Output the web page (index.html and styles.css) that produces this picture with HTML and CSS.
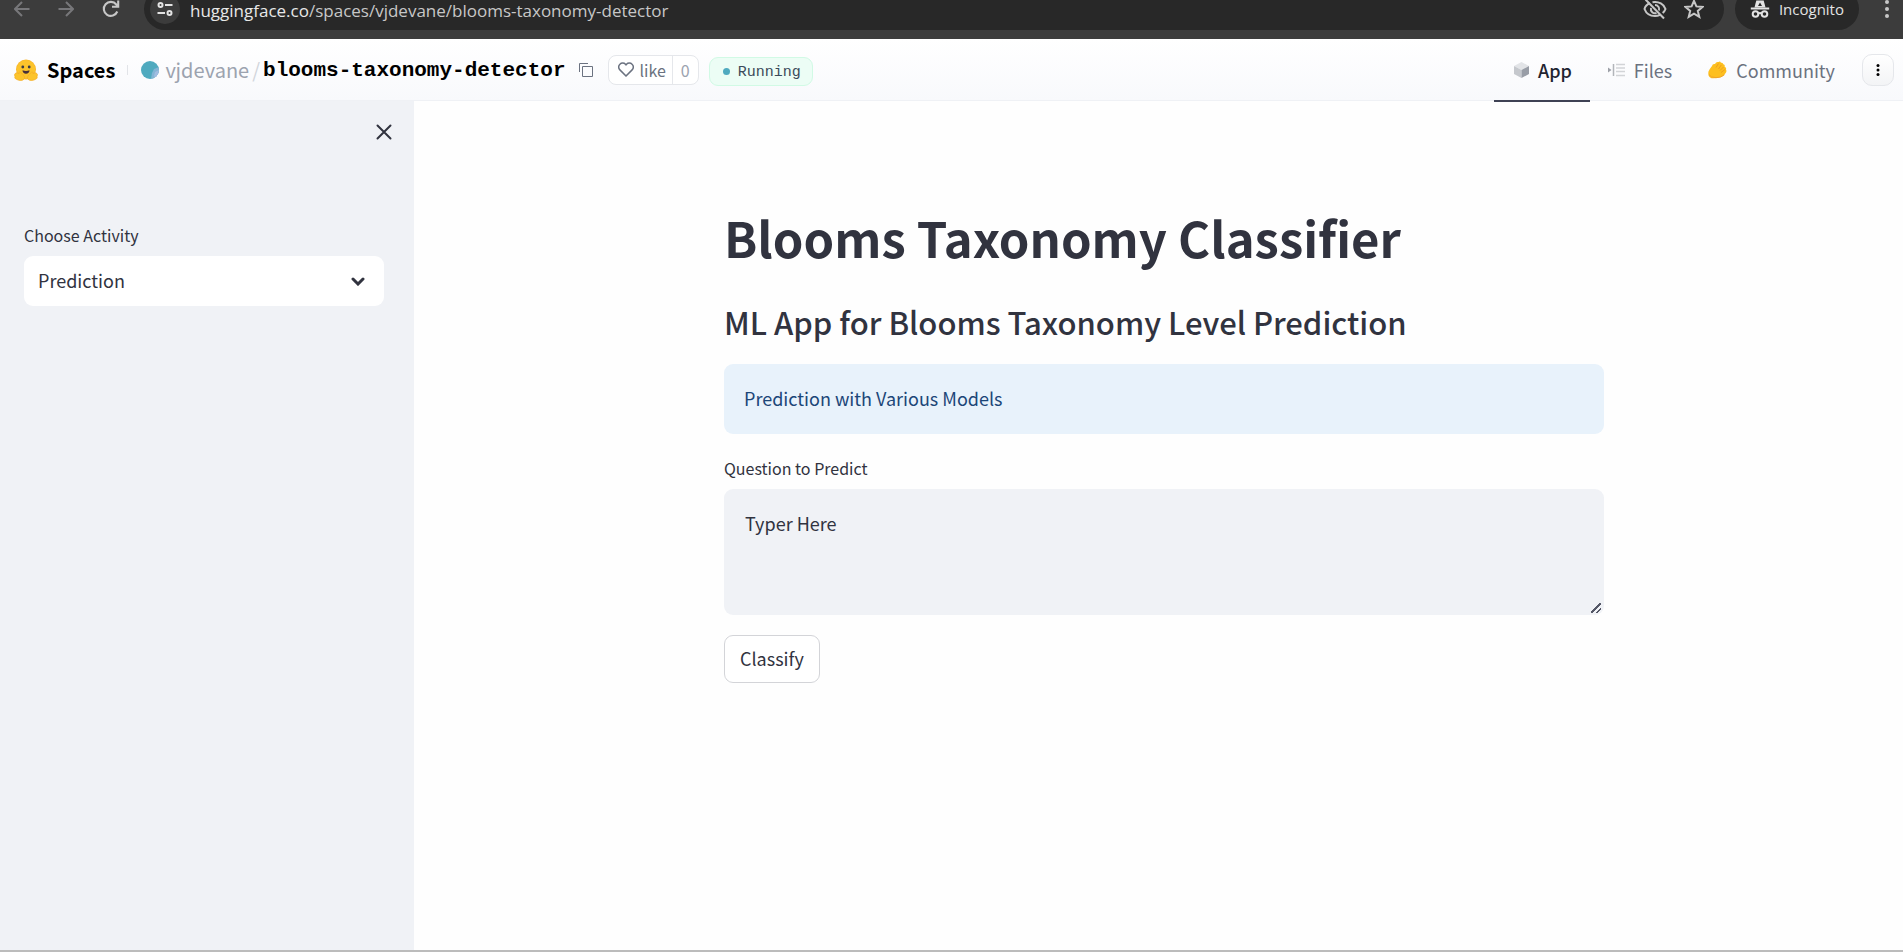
FILE: index.html
```html
<!DOCTYPE html>
<html lang="en">
<head>
<meta charset="utf-8">
<title>Blooms Taxonomy Classifier</title>
<link rel="stylesheet" href="styles.css">
</head>
<body>
<header class="browser">
  <div class="browser-nav">
    <button class="tool dim" aria-label="Back"><svg width="16" height="16" viewBox="0 0 16 16"><path d="M15.500 8H1.500M8 1L1 8l7 7"/></svg></button>
    <button class="tool dim" aria-label="Forward"><svg width="16" height="16" viewBox="0 0 16 16"><path d="M.5 8h14M8 1l7 7-7 7"/></svg></button>
    <button class="tool" aria-label="Reload"><svg width="18" height="18" viewBox="0 0 18 18"><path d="M15.300 11.500A7 7 0 1 1 14.300 4.500L16 6.500M16.200 0.500V6.700H10" stroke-width="2.100"/></svg></button>
  </div>
  <div class="omnibox">
    <button class="site-info" aria-label="Site information"><svg width="16" height="14" viewBox="0 0 16 14"><circle cx="3.500" cy="3" r="2"/><path d="M8 3h7.500M.5 11H8"/><circle cx="12.500" cy="11" r="2"/></svg></button>
    <span class="url"><span class="host">huggingface.co</span>/spaces/vjdevane/blooms-taxonomy-detector</span>
    <button class="tool" aria-label="Third-party cookies blocked"><svg width="24" height="22" viewBox="0 0 24 22"><path d="M7 5.300C3.500 6.500 2 9 1.500 11c1.500 4 5.500 7 10.500 7 2 0 3.500-.4 5-1.200M9.500 4.200C16 3 21 6.500 22.500 11c-.5 1.500-1.500 2.800-2.800 4"/><path d="M12 7a4.200 4.200 0 0 1 4 5.500M8 10a4.200 4.200 0 0 0 5.500 5"/><path d="M2.500 1.500l18.500 19"/></svg></button>
    <button class="tool" aria-label="Bookmark this tab"><svg width="20" height="20" viewBox="0 0 20 20"><path d="M10 1.800l2.400 5.600 6.100.5-4.700 4 1.500 6L10 14.700l-5.300 3.200 1.500-6-4.700-4 6.100-.5z"/></svg></button>
  </div>
  <div class="incognito">
    <svg width="20" height="20" viewBox="0 0 20 20"><path d="M6.300 1.500h7.400L15.500 8.500h-11z" fill="currentColor" stroke="none"/><path d="M8 7l2-3.500L12 7z" fill="#282828" stroke="none"/><path d="M.8 9.500h18.400"/><circle cx="5.500" cy="15" r="2.800"/><circle cx="14.500" cy="15" r="2.800"/><path d="M8 14.500q2-1 4 0"/></svg>
    <span>Incognito</span>
  </div>
  <button class="tool menu" aria-label="Browser menu"><svg width="6" height="22" viewBox="0 0 6 22"><g fill="currentColor" stroke="none"><circle cx="3" cy="4" r="2"/><circle cx="3" cy="11" r="2"/><circle cx="3" cy="18" r="2"/></g></svg></button>
</header>

<nav class="hub">
  <a class="brand" href="#"><svg width="24" height="22" viewBox="0 0 24 22"><circle cx="12" cy="10.500" r="10" fill="#f9b62b"/><circle cx="12" cy="10.300" r="9.200" fill="#fcc42c"/><circle cx="8.800" cy="8" r="1.400" fill="#3a3b45"/><circle cx="15.200" cy="8" r="1.400" fill="#3a3b45"/><path d="M8.500 11.200q3.500 1.500 7 0c0 2.200-1.500 3.500-3.500 3.500s-3.500-1.300-3.500-3.500z" fill="#47303a"/><path d="M1.200 14.500c-.9 1-.8 2-.2 2.700-.6 1.600.3 2.700 1.500 3.100 2.300 1.500 6.300 1.700 7.600-.2 1.100-1.600.2-3.300-1.400-4.600-.8-.8-1.800-2.500-3-2.500-.9 0-1 1-.6 1.900-1.200-.9-2.800-1.600-3.900-.4zM22.800 14.500c.9 1 .8 2 .2 2.700.6 1.600-.3 2.700-1.500 3.100-2.300 1.500-6.300 1.700-7.600-.2-1.100-1.600-.2-3.300 1.400-4.600.8-.8 1.800-2.500 3-2.500.9 0 1 1 .6 1.900 1.200-.9 2.800-1.600 3.900-.4z" fill="#fcc42c" stroke="#f5ae27" stroke-width=".8"/></svg><span>Spaces</span></a>
  <span class="rule"></span>
  <svg class="avatar" width="18" height="18" viewBox="0 0 18 18"><defs><clipPath id="disc"><circle cx="9" cy="9" r="9"/></clipPath></defs><g clip-path="url(#disc)"><path fill="#4faabf" d="M0 0h18v18H0z"/><path fill="#83b5d5" d="M18 6l-5 2-2 4-1 6h8z"/><path fill="#a0bce0" d="M18 9l-4 2-1 4 2 3h3z"/></g></svg>
  <a class="owner" href="#">vjdevane</a><span class="slash">/</span><a class="repo" href="#">blooms-taxonomy-detector</a>
  <button class="copy" aria-label="Copy name"><svg width="14" height="14" viewBox="0 0 14 14"><path d="M3.500 3.500h10v10h-10zM.5 9V.5H9"/></svg></button>
  <div class="like"><button class="like-btn"><svg width="16" height="15" viewBox="0 0 16 15"><path d="M8 14L1.900 7.900a3.900 3.900 0 0 1 0-5.700 3.900 3.900 0 0 1 5.600 0L8 2.800l.5-.6a3.900 3.900 0 0 1 5.600 0 3.900 3.900 0 0 1 0 5.700z"/></svg>like</button><button class="like-count">0</button></div>
  <div class="status"><span class="dot"></span><span>Running</span></div>
  <div class="tabs">
    <a class="tab active" href="#"><svg width="15" height="16" viewBox="0 0 15 16"><path d="M7.500 0L15 4 7.500 8 0 4z" fill="#e2e4e7"/><path d="M0 4l7.500 4v8L0 12z" fill="#c5c8cd"/><path d="M15 4L7.500 8v8l7.500-4z" fill="#989da6"/></svg>App</a>
    <a class="tab" href="#"><svg width="17" height="14" viewBox="0 0 17 14"><path d="M0 4.500L3.500 7 0 9.500z" fill="#9da1a8"/><path d="M5.500 1v12" stroke="#b2b5ba" stroke-width="1.500"/><path d="M8 1.500h9M8 5h9M8 8.500h9M8 12.500h9" stroke="#d2d4d7" stroke-width="1.500"/></svg>Files</a>
    <a class="tab" href="#"><svg width="19" height="18" viewBox="0 0 19 18"><path d="M.5 10.500Q1.500 8 4 5q.5-2.500 3-2 1-2.500 3.500-2 1.500-1.500 2.500.8 2-.5 2.300 1.500 2 .2 1.300 2.400 2 .6 1.400 2.800 1 1.500-.3 3.500-1.700 3-5.700 4.300-4.500 1.500-8.500.9-4-1.200-3-6.700z" fill="#fdbf1f"/><path d="M10.500 8l2.800-4M12 9.500l3.500-3.500M13 11.500l4-3M8 6.500l2.500-4" stroke="#f09f1f" fill="none"/><path d="M1 13.500q1.500 3.200 7 3.200 5 .2 8.500-3" stroke="#efa32a" fill="none"/></svg>Community</a>
  </div>
  <button class="more" aria-label="More options"><svg width="4" height="12" viewBox="0 0 4 12"><circle cx="2" cy="1.500" r="1.500"/><circle cx="2" cy="6" r="1.500"/><circle cx="2" cy="10.500" r="1.500"/></svg></button>
</nav>

<div class="app">
  <aside class="sidebar">
    <button class="close" aria-label="Close sidebar"><svg width="16" height="16" viewBox="0 0 16 16"><path d="M1.500 1.500l13 13M14.500 1.500l-13 13"/></svg></button>
    <label class="label" for="activity">Choose Activity</label>
    <div class="select">
      <select id="activity"><option>Prediction</option></select>
      <svg class="chevron" width="14" height="9" viewBox="0 0 14 9"><path d="M2 2l5 5 5-5"/></svg>
    </div>
  </aside>
  <main class="main">
    <div class="content">
      <h1>Blooms Taxonomy Classifier</h1>
      <h2>ML App for Blooms Taxonomy Level Prediction</h2>
      <div class="info">Prediction with Various Models</div>
      <label class="label" for="question">Question to Predict</label>
      <textarea id="question">Typer Here</textarea>
      <button class="classify">Classify</button>
    </div>
  </main>
</div>
</body>
</html>
```
FILE: styles.css
```css
* { box-sizing: border-box; }

body {
  margin: 0;
  min-height: 100vh;
  display: flex;
  flex-direction: column;
  font-family: "Noto Sans CJK SC", "Open Sans", sans-serif;
  font-size: 18px;
  line-height: 26px;
  color: #31333f;
  background: #fefefe;
  border-bottom: 2px solid #bcbcbc;
}

button, select, textarea { font: inherit; color: inherit; margin: 0; }
button { padding: 0; border: 0; background: none; }
a { color: inherit; text-decoration: none; }
svg { display: block; flex: none; }

/* Browser toolbar */
.browser {
  display: flex;
  align-items: flex-end;
  height: 39px;
  padding: 0 13px 9px 14px;
  overflow: hidden;
  background: #3c3c3c;
  color: #c7c7c7;
}
.browser svg { fill: none; stroke: currentColor; stroke-width: 2; }
.browser-nav { display: flex; align-items: center; gap: 28px; width: 130px; height: 42px; }
.tool { color: #c7c7c7; }
.tool.dim { color: #77777a; }
.omnibox {
  display: flex;
  flex: 1;
  align-items: center;
  gap: 17px;
  height: 42px;
  padding: 0 20px 0 6px;
  border-radius: 21px;
  background: #282828;
}
.site-info {
  display: grid;
  place-items: center;
  width: 30px;
  height: 30px;
  border-radius: 50%;
  background: #3c3c3c;
  color: #e3e3e3;
}
.url { flex: 1; margin-left: -7px; padding-top: 3px; font: 17px/18px "Open Sans", sans-serif; }
.host { color: #e8e8e8; }
.incognito {
  display: flex;
  align-items: center;
  gap: 9px;
  height: 42px;
  margin-left: 11px;
  padding: 0 15px;
  border-radius: 21px;
  background: #282828;
  color: #e3e3e3;
  font: 15px/18px "Open Sans", sans-serif;
}
.menu { display: flex; align-items: center; height: 42px; margin-left: 25px; }

/* Hub header */
.hub {
  display: flex;
  align-items: center;
  height: 62px;
  padding: 0 9px 0 14px;
  border-bottom: 1px solid #eff1f5;
  background: linear-gradient(#fff, #f8f9fc);
}
.brand { display: flex; align-items: center; gap: 9px; font-size: 20px; font-weight: 700; color: #000; }
.rule { width: 1px; height: 10px; margin: 0 13px 0 12px; background: #e2e4e8; }
.avatar { margin-right: 6px; }
.owner { font-size: 20px; color: #9ca3af; }
.slash { margin: 0 3px; font-size: 20px; color: #d1d5db; }
.repo { padding-top: 3px; font-family: "Liberation Mono", monospace; font-size: 21px; font-weight: 700; color: #000; }
.copy { margin-left: 14px; }
.copy svg, .like svg { fill: none; stroke: #6b7280; stroke-width: 1; }
.like svg { stroke-width: 1.5; }
.like {
  display: flex;
  height: 30px;
  margin-left: 15px;
  border: 1px solid #e5e7eb;
  border-radius: 8px;
  background: #fff;
  font-size: 16px;
}
.like-btn { display: flex; align-items: center; gap: 5px; padding: 0 6px 0 9px; color: #6b7280; }
.like-count { padding: 0 8px; border-left: 1px solid #e5e7eb; color: #9ca3af; }
.status {
  display: flex;
  align-items: center;
  gap: 8px;
  height: 29px;
  margin: 4px 0 0 10px;
  padding: 0 11px 0 13px;
  border: 1px solid #d1fae5;
  border-radius: 9px;
  background: #ecfdf5;
  font: 15px/20px "Liberation Mono", monospace;
  color: #3b4a5a;
}
.status span:last-child { padding-top: 3px; }
.dot { width: 7px; height: 7px; border-radius: 50%; background: #4faabf; }
.tabs { display: flex; align-self: stretch; margin-left: auto; }
.tab {
  display: flex;
  align-items: center;
  gap: 9px;
  height: 63px;
  padding: 1px 18px 0;
  border-bottom: 2px solid transparent;
  color: #6b7280;
}
.tab.active { padding: 1px 18px 0 20px; border-color: #3f4254; color: #1f2430; font-weight: 500; }
.more {
  display: grid;
  place-items: center;
  width: 32px;
  height: 32px;
  margin-left: 9px;
  border: 1px solid #e5e7eb;
  border-radius: 10px;
  background: linear-gradient(#fff, #f3f4f6);
}

/* App */
.app { display: flex; flex: 1; }
.sidebar {
  display: flex;
  flex-direction: column;
  width: 414px;
  padding: 23px 30px 24px 24px;
  background: #f0f2f6;
}
.close { align-self: flex-end; margin: 0 -8px 83px 0; }
.close svg, .chevron { fill: none; stroke: #31333f; stroke-width: 2; stroke-linecap: round; }
.label { display: block; margin-bottom: 9px; font-size: 16px; line-height: 24px; }
.select { position: relative; }
.select select {
  width: 100%;
  height: 50px;
  padding: 0 14px 2px;
  appearance: none;
  border: 0;
  border-radius: 9px;
  background: #fff;
}
.chevron { position: absolute; top: 21px; right: 19px; pointer-events: none; stroke-width: 3; }

.main { flex: 1; padding: 104px 24px 24px 35px; }
.content { max-width: 880px; margin: 0 auto; }
h1 { margin: 0; font-size: 49px; line-height: 64px; font-weight: 700; }
h2 { margin: 29px 0 18px; font-size: 31px; line-height: 48px; font-weight: 500; }
.info {
  margin-bottom: 22px;
  padding: 21px 20px 23px;
  border-radius: 9px;
  background: #e8f2fb;
  color: #1c4678;
}
textarea {
  display: block;
  width: 100%;
  height: 126px;
  padding: 21px;
  border: 0;
  border-radius: 9px;
  background: #f0f2f6;
  resize: vertical;
}
textarea::-webkit-resizer {
  background: linear-gradient(135deg, transparent 6px, #555867 6px, #555867 8px, transparent 8px, transparent 10px, #555867 10px, #555867 12px, transparent 12px) 2px 3px / 10px 10px no-repeat;
}
.classify {
  height: 48px;
  margin-top: 20px;
  padding: 0 15px 2px;
  border: 1px solid #d3d4d8;
  border-radius: 9px;
  background: #fff;
}
```
